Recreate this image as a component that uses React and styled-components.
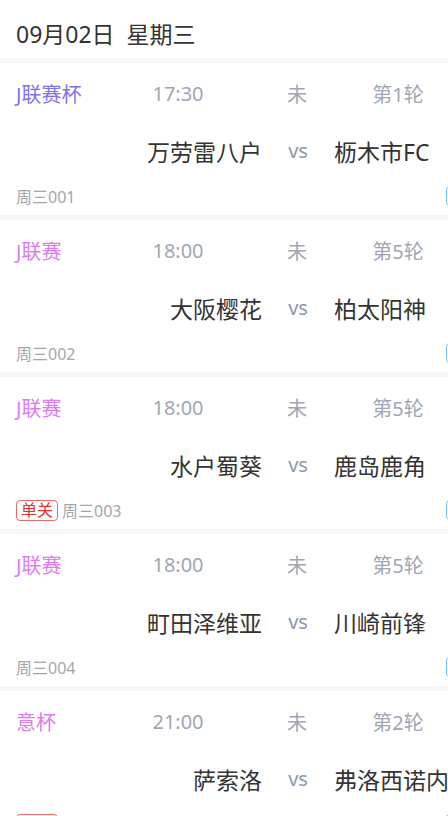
import React from "react";
import styled, { createGlobalStyle } from "styled-components";

const matches = [
  { league: "J联赛杯", color: "#7d72f2", time: "17:30", round: "第1轮", home: "万劳雷八户", away: "枥木市FC", code: "周三001" },
  { league: "J联赛", color: "#e07af0", time: "18:00", round: "第5轮", home: "大阪樱花", away: "柏太阳神", code: "周三002" },
  { league: "J联赛", color: "#e07af0", time: "18:00", round: "第5轮", home: "水户蜀葵", away: "鹿岛鹿角", code: "周三003", single: true },
  { league: "J联赛", color: "#e07af0", time: "18:00", round: "第5轮", home: "町田泽维亚", away: "川崎前锋", code: "周三004" },
  { league: "意杯", color: "#e07af0", time: "21:00", round: "第2轮", home: "萨索洛", away: "弗洛西诺内", code: "周三005", single: true },
];

const GlobalStyle = createGlobalStyle`
  body {
    margin: 0;
    background: #fff;
    font-family: "Noto Sans", "Noto Sans CJK SC", sans-serif;
    overflow: hidden;
  }
`;

const Page = styled.div`
  width: 448px;
  height: 816px;
  overflow: hidden;
`;

const DateHeader = styled.div`
  height: 58px;
  box-sizing: border-box;
  padding: 7px 16px 0;
  display: flex;
  align-items: center;
  font-size: 23px;
  color: #333;
  white-space: pre;
`;

const Card = styled.div`
  border-top: 5px solid #f5f7fa;
  height: 157px;
  box-sizing: border-box;
  overflow: hidden;
`;

const InfoRow = styled.div`
  height: 60px;
  padding: 0 0 0 16px;
  display: grid;
  grid-template-columns: 112px 100px 138px 64px;
  align-items: center;
  font-size: 20px;
  color: #a0a6b4;
  white-space: nowrap;
`;

const League = styled.span`
  color: ${(p) => p.$color};
`;

const Center = styled.span`
  text-align: center;
`;

const TeamRow = styled.div`
  height: 55px;
  padding-left: 16px;
  display: grid;
  grid-template-columns: 246px 72px 1fr;
  align-items: center;
  white-space: nowrap;
`;

const Team = styled.span`
  font-size: 23px;
  color: #333;
  text-align: ${(p) => (p.$right ? "right" : "left")};
`;

const Vs = styled.span`
  font-size: 20px;
  color: #8b98ab;
  text-align: center;
`;

const Footer = styled.div`
  height: 36px;
  padding-left: 16px;
  display: flex;
  align-items: center;
  font-size: 16px;
  color: #a3a6ad;
  white-space: nowrap;
`;

const Single = styled.span`
  border: 1px solid #e46a6a;
  color: #e0322f;
  border-radius: 4px;
  padding: 0 4px;
  font-size: 16px;
  line-height: 19px;
  margin-right: 4px;
`;

const Tag = styled.span`
  margin-left: auto;
  margin-right: -60px;
  width: 60px;
  height: 20px;
  border: 1.5px solid #7cc2ec;
  border-radius: 5px;
`;

function MatchCard({ m }) {
  return (
    <Card>
      <InfoRow>
        <League $color={m.color}>{m.league}</League>
        <Center>{m.time}</Center>
        <Center>未</Center>
        <Center>{m.round}</Center>
      </InfoRow>
      <TeamRow>
        <Team $right>{m.home}</Team>
        <Vs>vs</Vs>
        <Team>{m.away}</Team>
      </TeamRow>
      <Footer>
        {m.single && <Single>单关</Single>}
        {m.code}
        <Tag />
      </Footer>
    </Card>
  );
}

export default function App() {
  return (
    <Page>
      <GlobalStyle />
      <DateHeader>09月02日  星期三</DateHeader>
      {matches.map((m, i) => (
        <MatchCard key={i} m={m} />
      ))}
    </Page>
  );
}
